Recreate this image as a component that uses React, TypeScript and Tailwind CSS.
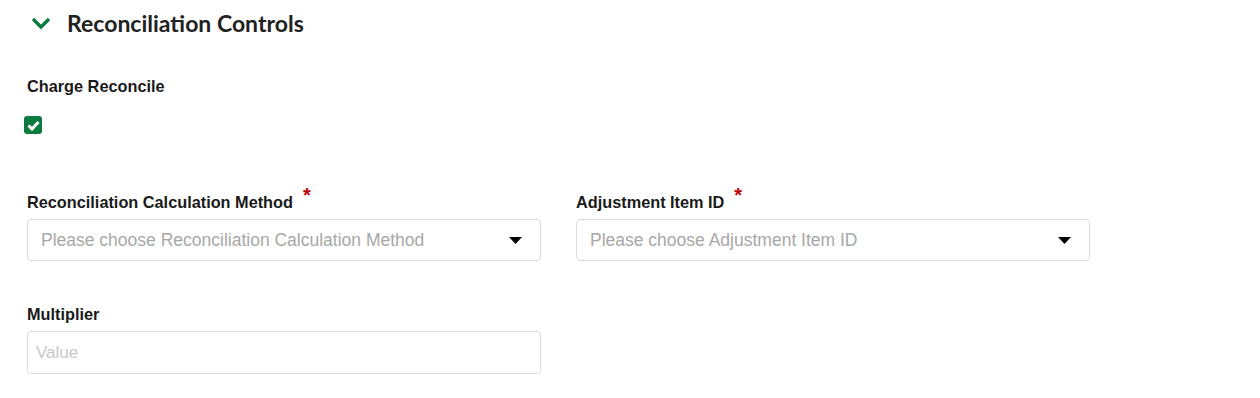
import React from "react";

function Caret() {
  return (
    <svg width="13" height="7" viewBox="0 0 13 7" className="shrink-0">
      <path d="M0 0 H13 L6.5 7 Z" fill="#000" />
    </svg>
  );
}

function SelectField({ label, placeholder }: { label: string; placeholder: string }) {
  return (
    <div className="flex flex-col w-[514px]">
      <div className="flex items-start h-[33px] pt-[8px]">
        <span className="text-[16.3px] font-bold text-[#1a1a1a] leading-[18px]">{label}</span>
        <span className="ml-[10px] -mt-[7px] text-[20px] font-bold text-[#c00000] leading-[18px]">*</span>
      </div>
      <div className="h-[42px] border border-[#dcdcdc] rounded-[4px] flex items-center pl-[13px] pr-[18px] mt-[1px]">
        <span className="flex-1 text-[17.5px] text-[#a8a8a8]">{placeholder}</span>
        <Caret />
      </div>
    </div>
  );
}

export default function App() {
  return (
    <div className="w-[1260px] h-[398px] bg-white font-['Liberation_Sans',Arial,sans-serif]">
      <div className="flex items-center h-[46px] pl-[31px] pt-[1px]">
        <svg width="20" height="13" viewBox="0 0 20 13" className="shrink-0">
          <path d="M2 2 L10 10 L18 2" fill="none" stroke="#0c7b40" strokeWidth="3.4" />
        </svg>
        <span className="ml-[16px] font-['Lato',sans-serif] font-bold text-[23px] text-[#222] leading-none">
          Reconciliation Controls
        </span>
      </div>
      <div className="pl-[27px]">
        <div className="mt-[31px] text-[16.3px] font-bold text-[#1a1a1a] leading-[18px]">Charge Reconcile</div>
        <div className="mt-[21px] -ml-[3px] w-[18px] h-[18px] rounded-[3px] bg-[#0c7b40] flex items-center justify-center">
          <svg width="13" height="11" viewBox="0 0 13 11">
            <path d="M1.5 5.5 L5 9 L11.5 2" fill="none" stroke="#fff" strokeWidth="3" />
          </svg>
        </div>
        <div className="flex gap-[35px] mt-[51px]">
          <SelectField label="Reconciliation Calculation Method" placeholder="Please choose Reconciliation Calculation Method" />
          <SelectField label="Adjustment Item ID" placeholder="Please choose Adjustment Item ID" />
        </div>
        <div className="mt-[44px] text-[16.3px] font-bold text-[#1a1a1a] leading-[18px]">Multiplier</div>
        <div className="mt-[8px] w-[514px] h-[43px] border border-[#dcdcdc] rounded-[4px] flex items-center pl-[8px]">
          <span className="text-[17px] text-[#c8c8c8]">Value</span>
        </div>
      </div>
    </div>
  );
}
